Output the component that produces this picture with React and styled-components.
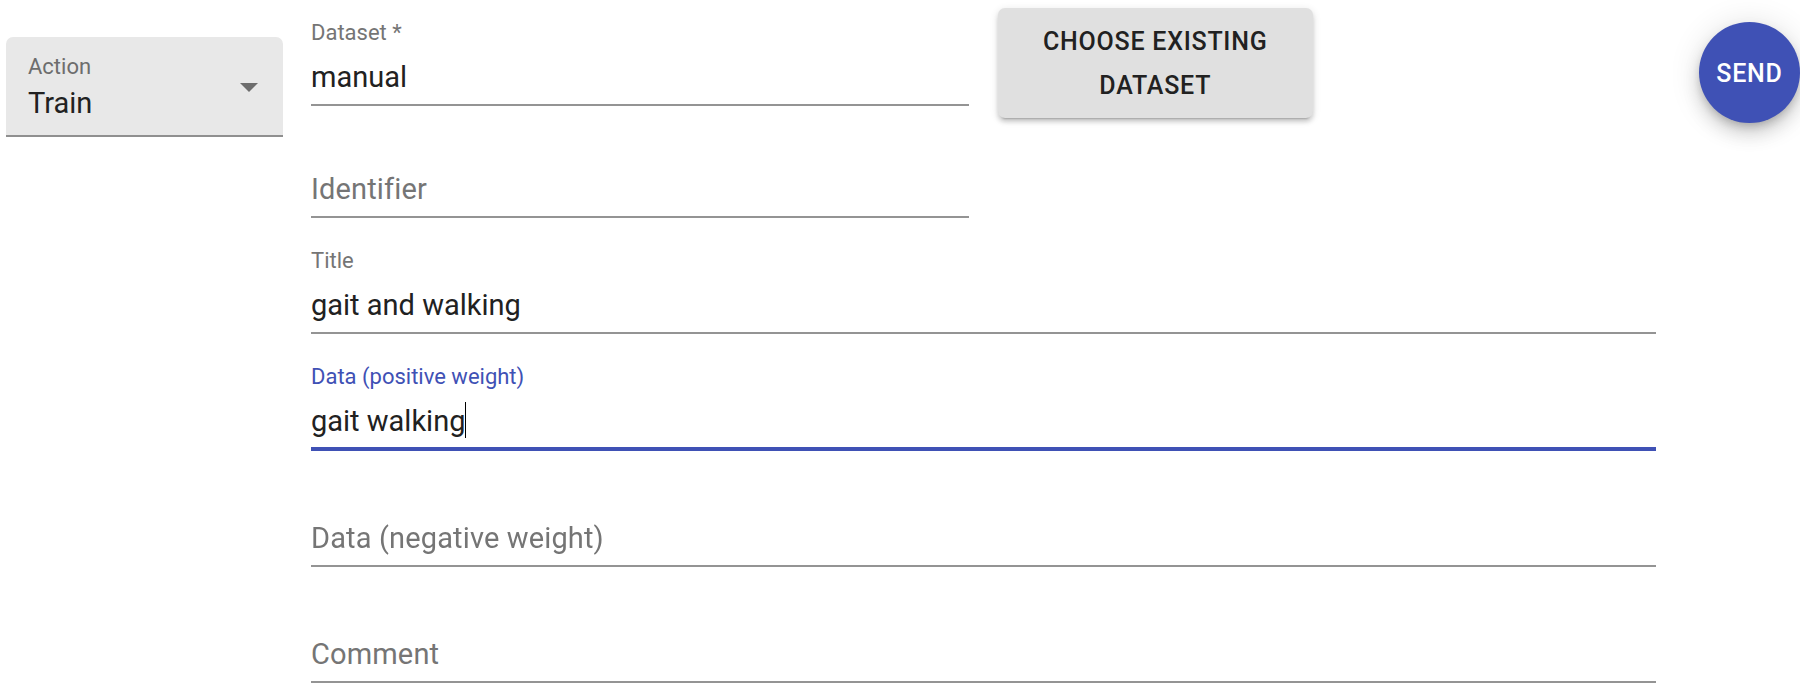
import { useLayoutEffect, useRef, useState } from "react";
import styled, { createGlobalStyle, css } from "styled-components";

const GlobalStyle = createGlobalStyle`
  *, *::before, *::after { box-sizing: border-box; }
  body {
    margin: 0;
    background: #fff;
    color: #212121;
    font-family: Roboto, "Liberation Sans", sans-serif;
  }
`;

const Page = styled.form`
  display: grid;
  grid-template-columns: 277px minmax(0, 1fr) auto;
  align-items: start;
  padding-left: 6px;
`;

const ActionBox = styled.div`
  display: grid;
  grid-template-columns: minmax(0, 1fr) auto;
  margin-top: 37px;
  background: #e8e8e8;
  border-bottom: 2px solid #8f8f8f;
  border-radius: 7px 7px 0 0;
`;

const ActionLabel = styled.label`
  grid-area: 1 / 1;
  align-self: start;
  padding: 18px 0 0 22px;
  font-size: 22px;
  line-height: 24px;
  color: #6d6d6d;
  pointer-events: none;
  z-index: 1;
`;

const ActionSelect = styled.select`
  grid-area: 1 / 1 / 2 / 3;
  appearance: none;
  width: 100%;
  padding: 49px 56px 15px 22px;
  border: 0;
  outline: 0;
  background: transparent;
  font: 400 29px/34px Roboto, "Liberation Sans", sans-serif;
  color: #212121;
`;

const Arrow = styled.svg`
  grid-area: 1 / 2;
  align-self: center;
  width: 18px;
  height: 9px;
  margin: 3px 25px 0 0;
  fill: #6d6d6d;
  pointer-events: none;
`;

const Fields = styled.div`
  display: grid;
  grid-template-columns: repeat(4, minmax(0, 1fr));
  column-gap: 29px;
  row-gap: 18px;
  align-items: start;
  padding: 8px 43px 6px 28px;
`;

const Names = styled.div`
  grid-column: span 2;
  display: grid;
  row-gap: 14px;
`;

const FieldBox = styled.div`
  grid-column: 1 / -1;
  display: grid;
  grid-template-rows: 27px auto;
  padding-top: 13px;
`;

const FieldLabel = styled.label`
  grid-area: 1 / 1;
  font-size: 22px;
  line-height: 24px;
  color: ${(p) => (p.$focused ? "#3f51b5" : "#757575")};
  ${(p) =>
    p.$resting &&
    css`
      grid-area: 2 / 1;
      padding-top: 12px;
      font-size: 29px;
      line-height: 34px;
      letter-spacing: 0.005em;
      pointer-events: none;
    `}
`;

const FieldInput = styled.input`
  grid-area: 2 / 1;
  width: 100%;
  height: ${(p) => (p.$focused ? "59px" : "58px")};
  padding: 12px 0 ${(p) => (p.$focused ? "9px" : "10px")};
  border: 0;
  border-bottom: ${(p) => (p.$focused ? "4px solid #3f51b5" : "2px solid #949494")};
  border-radius: 0;
  outline: 0;
  background: transparent;
  color: #212121;
  caret-color: transparent;
  font: 400 29px/34px Roboto, "Liberation Sans", sans-serif;
`;

const Caret = styled.span`
  grid-area: 2 / 1;
  width: 1px;
  height: 36px;
  margin-top: 10px;
  background: #000;
  pointer-events: none;
`;

const ChooseButton = styled.button`
  grid-column: span 1;
  padding: 12px 28px 10px;
  border: 0;
  border-radius: 7px;
  background: #e0e0e0;
  color: #212121;
  font: 500 25px/44px Roboto, "Liberation Sans", sans-serif;
  letter-spacing: 0.03em;
  text-transform: uppercase;
  box-shadow: 0 5px 2px -4px rgba(0, 0, 0, 0.2), 0 4px 4px 0 rgba(0, 0, 0, 0.14),
    0 2px 9px 0 rgba(0, 0, 0, 0.12);
`;

const SendButton = styled.button`
  width: 101px;
  height: 101px;
  margin-top: 22px;
  padding: 2px 0 0;
  border: 0;
  border-radius: 50%;
  background: #3f51b5;
  color: #fff;
  font: 500 25px/44px Roboto, "Liberation Sans", sans-serif;
  letter-spacing: 0.03em;
  text-transform: uppercase;
  box-shadow: 0 5px 9px -2px rgba(0, 0, 0, 0.2), 0 11px 18px 0 rgba(0, 0, 0, 0.14),
    0 2px 32px 0 rgba(0, 0, 0, 0.12);
`;

function textWidth(input, text) {
  const context = document.createElement("canvas").getContext("2d");
  context.font = getComputedStyle(input).font;
  return Math.round(context.measureText(text).width);
}

function Field({ id, label, initial = "", focusFirst = false, required = false }) {
  const input = useRef(null);
  const [value, setValue] = useState(initial);
  const [focused, setFocused] = useState(focusFirst);
  const [caret, setCaret] = useState(0);

  const placeCaret = () => {
    const el = input.current;
    setCaret(textWidth(el, el.value.slice(0, el.selectionEnd)));
  };

  useLayoutEffect(() => {
    if (focusFirst) {
      input.current.focus();
      input.current.setSelectionRange(initial.length, initial.length);
      placeCaret();
    }
  }, [focusFirst, initial]);

  return (
    <FieldBox>
      <FieldLabel htmlFor={id} $focused={focused} $resting={!value && !focused}>
        {label}
        {required && " *"}
      </FieldLabel>
      <FieldInput
        ref={input}
        id={id}
        type="text"
        value={value}
        required={required}
        spellCheck={false}
        autoComplete="off"
        onChange={(e) => setValue(e.target.value)}
        onSelect={placeCaret}
        onFocus={() => setFocused(true)}
        onBlur={() => setFocused(false)}
        $focused={focused}
      />
      {focused && <Caret style={{ marginLeft: caret }} />}
    </FieldBox>
  );
}

export default function App() {
  return (
    <>
      <GlobalStyle />
      <Page onSubmit={(e) => e.preventDefault()}>
        <ActionBox>
          <ActionLabel htmlFor="action">Action</ActionLabel>
          <ActionSelect id="action" defaultValue="train">
            <option value="train">Train</option>
          </ActionSelect>
          <Arrow viewBox="0 0 18 9" aria-hidden="true">
            <path d="M0 0h18L9 9z" />
          </Arrow>
        </ActionBox>
        <Fields>
          <Names>
            <Field id="dataset" label="Dataset" initial="manual" required />
            <Field id="identifier" label="Identifier" />
          </Names>
          <ChooseButton type="button">Choose existing dataset</ChooseButton>
          <Field id="title" label="Title" initial="gait and walking" />
          <Field id="positive" label="Data (positive weight)" initial="gait walking" focusFirst />
          <Field id="negative" label="Data (negative weight)" />
          <Field id="comment" label="Comment" />
        </Fields>
        <SendButton type="submit">Send</SendButton>
      </Page>
    </>
  );
}
